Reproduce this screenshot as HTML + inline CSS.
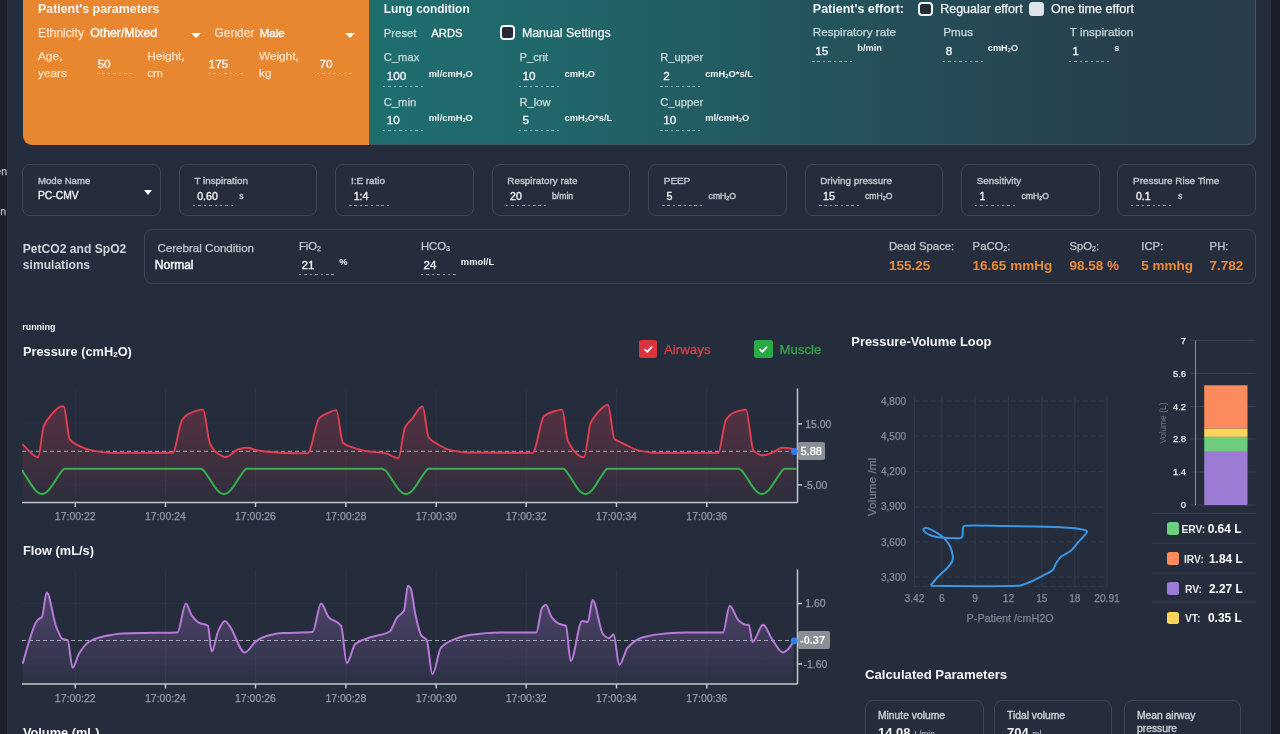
<!DOCTYPE html>
<html><head><meta charset="utf-8"><style>
html,body{margin:0;padding:0;width:1280px;height:734px;overflow:hidden;background:#252d3c;font-family:"Liberation Sans",sans-serif}
.t{position:absolute;white-space:nowrap;line-height:1}
body{will-change:transform}
.r{position:absolute}
svg.r{overflow:visible}
</style></head><body>
<div class="r" style="left:0px;top:0px;width:7.3px;height:734px;background:linear-gradient(90deg,#1c202a 0,#1c202a 4.5px,#181c28 7.3px)"></div>
<div class="r" style="left:7.3px;top:0px;width:3px;height:734px;background:linear-gradient(90deg,#2b2f3e,#262d3c)"></div>
<div class="r" style="left:1268.4px;top:0px;width:3px;height:734px;background:linear-gradient(90deg,#262d3c,#2a2e3e)"></div>
<div class="r" style="left:1271.4px;top:0px;width:8.6px;height:734px;background:linear-gradient(90deg,#1a1d28 0,#1c1f29 2px,#1c1f29 8.6px)"></div>
<div class="t" style="left:-60.0px;top:166px;font-size:10.5px;font-weight:400;color:#b8bcc2;width:67px;text-align:right;-webkit-text-stroke:0.25px currentColor;">Open</div>
<div class="t" style="left:-60.0px;top:206px;font-size:10.5px;font-weight:400;color:#b8bcc2;width:66px;text-align:right;-webkit-text-stroke:0.25px currentColor;">Run</div>
<div class="r" style="left:360px;top:-20px;width:896px;height:165px;border-radius:0 0 9px 0;background:linear-gradient(90deg,#1e6e6f 9px,#21666a 200px,#24525b 490px,#283e4c 780px,#283c4b 896px);border:1px solid #3b5864;border-left:none;box-sizing:border-box"></div>
<div class="r" style="left:22.6px;top:-20px;width:346.4px;height:165.4px;border-radius:0 0 0 9px;background:#e8872f"></div>
<div class="t" style="left:38.0px;top:3px;font-size:12.4px;font-weight:700;color:#f3f4f6;">Patient's parameters</div>
<div class="t" style="left:38.0px;top:27px;font-size:12.2px;font-weight:400;color:rgba(255,240,225,0.82);;-webkit-text-stroke:0.25px currentColor;">Ethnicity</div>
<div class="t" style="left:90.2px;top:27px;font-size:12.3px;font-weight:400;color:#f3f4f6;;-webkit-text-stroke:0.5px currentColor;">Other/Mixed</div>
<div class="r" style="left:191.0px;top:32.8px;width:0;height:0;border-left:5.0px solid transparent;border-right:5.0px solid transparent;border-top:5px solid #fff"></div>
<div class="t" style="left:214.6px;top:28px;font-size:11.9px;font-weight:400;color:rgba(255,240,225,0.82);;-webkit-text-stroke:0.25px currentColor;">Gender</div>
<div class="t" style="left:259.5px;top:27px;font-size:11.7px;font-weight:400;color:#f3f4f6;;-webkit-text-stroke:0.5px currentColor;">Male</div>
<div class="r" style="left:345.4px;top:32.6px;width:0;height:0;border-left:5.0px solid transparent;border-right:5.0px solid transparent;border-top:5px solid #fff"></div>
<div class="t" style="left:38.0px;top:51px;font-size:11.8px;font-weight:400;color:rgba(255,240,225,0.82);;-webkit-text-stroke:0.25px currentColor;">Age,</div>
<div class="t" style="left:38.0px;top:68px;font-size:11.8px;font-weight:400;color:rgba(255,240,225,0.82);;-webkit-text-stroke:0.25px currentColor;">years</div>
<div class="t" style="left:97.5px;top:59px;font-size:11.8px;font-weight:400;color:#f3f4f6;;-webkit-text-stroke:0.35px currentColor;">50</div>
<div class="r" style="left:97px;top:73px;width:36px;height:1px;background:repeating-linear-gradient(90deg,rgba(255,255,255,0.5) 0 2.5px,transparent 2.5px 5.4px)"></div>
<div class="t" style="left:147.2px;top:51px;font-size:11.8px;font-weight:400;color:rgba(255,240,225,0.82);;-webkit-text-stroke:0.25px currentColor;">Height,</div>
<div class="t" style="left:147.2px;top:68px;font-size:11.8px;font-weight:400;color:rgba(255,240,225,0.82);;-webkit-text-stroke:0.25px currentColor;">cm</div>
<div class="t" style="left:208.6px;top:59px;font-size:11.8px;font-weight:400;color:#f3f4f6;;-webkit-text-stroke:0.35px currentColor;">175</div>
<div class="r" style="left:208px;top:73px;width:36px;height:1px;background:repeating-linear-gradient(90deg,rgba(255,255,255,0.5) 0 2.5px,transparent 2.5px 5.4px)"></div>
<div class="t" style="left:259.0px;top:51px;font-size:11.8px;font-weight:400;color:rgba(255,240,225,0.82);;-webkit-text-stroke:0.25px currentColor;">Weight,</div>
<div class="t" style="left:259.0px;top:68px;font-size:11.8px;font-weight:400;color:rgba(255,240,225,0.82);;-webkit-text-stroke:0.25px currentColor;">kg</div>
<div class="t" style="left:319.5px;top:59px;font-size:11.8px;font-weight:400;color:#f3f4f6;;-webkit-text-stroke:0.35px currentColor;">70</div>
<div class="r" style="left:317px;top:73px;width:37px;height:1px;background:repeating-linear-gradient(90deg,rgba(255,255,255,0.5) 0 2.5px,transparent 2.5px 5.4px)"></div>
<div class="t" style="left:383.8px;top:4px;font-size:11.9px;font-weight:700;color:#f3f4f6;">Lung condition</div>
<div class="t" style="left:383.8px;top:28px;font-size:11.3px;font-weight:400;color:rgba(228,240,240,0.8);;-webkit-text-stroke:0.25px currentColor;">Preset</div>
<div class="t" style="left:431.2px;top:28px;font-size:11.3px;font-weight:400;color:#f3f4f6;;-webkit-text-stroke:0.35px currentColor;">ARDS</div>
<div class="r" style="left:500px;top:25px;width:15px;height:15px;border:2.5px solid #f2f4f7;border-radius:4px;background:#262a36;box-sizing:border-box"></div>
<div class="t" style="left:521.9px;top:27px;font-size:12.4px;font-weight:400;color:#f3f4f6;;-webkit-text-stroke:0.25px currentColor;">Manual Settings</div>
<div class="t" style="left:383.8px;top:52px;font-size:11.2px;font-weight:400;color:rgba(228,240,240,0.8);;-webkit-text-stroke:0.25px currentColor;">C_max</div>
<div class="t" style="left:386.8px;top:70px;font-size:11.7px;font-weight:400;color:#f3f4f6;;-webkit-text-stroke:0.35px currentColor;">100</div>
<div class="r" style="left:383.3px;top:85.5px;width:40.0px;height:1px;background:repeating-linear-gradient(90deg,rgba(255,255,255,0.5) 0 2.5px,transparent 2.5px 5.4px)"></div>
<div class="t" style="left:428.8px;top:70px;font-size:9.3px;font-weight:700;color:#f3f4f6;">ml/cmH<span style="font-size:0.62em;vertical-align:-0.15em">2</span>O</div>
<div class="t" style="left:383.8px;top:97px;font-size:11.2px;font-weight:400;color:rgba(228,240,240,0.8);;-webkit-text-stroke:0.25px currentColor;">C_min</div>
<div class="t" style="left:386.8px;top:114px;font-size:11.7px;font-weight:400;color:#f3f4f6;;-webkit-text-stroke:0.35px currentColor;">10</div>
<div class="r" style="left:383.3px;top:129.8px;width:40.0px;height:1px;background:repeating-linear-gradient(90deg,rgba(255,255,255,0.5) 0 2.5px,transparent 2.5px 5.4px)"></div>
<div class="t" style="left:428.8px;top:114px;font-size:9.3px;font-weight:700;color:#f3f4f6;">ml/cmH<span style="font-size:0.62em;vertical-align:-0.15em">2</span>O</div>
<div class="t" style="left:519.5px;top:52px;font-size:11.2px;font-weight:400;color:rgba(228,240,240,0.8);;-webkit-text-stroke:0.25px currentColor;">P_crit</div>
<div class="t" style="left:522.5px;top:70px;font-size:11.7px;font-weight:400;color:#f3f4f6;;-webkit-text-stroke:0.35px currentColor;">10</div>
<div class="r" style="left:519.0px;top:85.5px;width:40.0px;height:1px;background:repeating-linear-gradient(90deg,rgba(255,255,255,0.5) 0 2.5px,transparent 2.5px 5.4px)"></div>
<div class="t" style="left:564.5px;top:70px;font-size:9.3px;font-weight:700;color:#f3f4f6;">cmH<span style="font-size:0.62em;vertical-align:-0.15em">2</span>O</div>
<div class="t" style="left:519.5px;top:97px;font-size:11.2px;font-weight:400;color:rgba(228,240,240,0.8);;-webkit-text-stroke:0.25px currentColor;">R_low</div>
<div class="t" style="left:522.5px;top:114px;font-size:11.7px;font-weight:400;color:#f3f4f6;;-webkit-text-stroke:0.35px currentColor;">5</div>
<div class="r" style="left:519.0px;top:129.8px;width:40.0px;height:1px;background:repeating-linear-gradient(90deg,rgba(255,255,255,0.5) 0 2.5px,transparent 2.5px 5.4px)"></div>
<div class="t" style="left:564.5px;top:114px;font-size:9.3px;font-weight:700;color:#f3f4f6;">cmH<span style="font-size:0.62em;vertical-align:-0.15em">2</span>O*s/L</div>
<div class="t" style="left:660.2px;top:52px;font-size:11.2px;font-weight:400;color:rgba(228,240,240,0.8);;-webkit-text-stroke:0.25px currentColor;">R_upper</div>
<div class="t" style="left:663.2px;top:70px;font-size:11.7px;font-weight:400;color:#f3f4f6;;-webkit-text-stroke:0.35px currentColor;">2</div>
<div class="r" style="left:659.7px;top:85.5px;width:40.0px;height:1px;background:repeating-linear-gradient(90deg,rgba(255,255,255,0.5) 0 2.5px,transparent 2.5px 5.4px)"></div>
<div class="t" style="left:705.2px;top:70px;font-size:9.3px;font-weight:700;color:#f3f4f6;">cmH<span style="font-size:0.62em;vertical-align:-0.15em">2</span>O*s/L</div>
<div class="t" style="left:660.2px;top:97px;font-size:11.2px;font-weight:400;color:rgba(228,240,240,0.8);;-webkit-text-stroke:0.25px currentColor;">C_upper</div>
<div class="t" style="left:663.2px;top:114px;font-size:11.7px;font-weight:400;color:#f3f4f6;;-webkit-text-stroke:0.35px currentColor;">10</div>
<div class="r" style="left:659.7px;top:129.8px;width:40.0px;height:1px;background:repeating-linear-gradient(90deg,rgba(255,255,255,0.5) 0 2.5px,transparent 2.5px 5.4px)"></div>
<div class="t" style="left:705.2px;top:114px;font-size:9.3px;font-weight:700;color:#f3f4f6;">ml/cmH<span style="font-size:0.62em;vertical-align:-0.15em">2</span>O</div>
<div class="t" style="left:812.8px;top:3px;font-size:12.5px;font-weight:700;color:#f3f4f6;">Patient's effort:</div>
<div class="r" style="left:918px;top:2px;width:15px;height:14px;border:2.5px solid #f2f4f7;border-radius:4px;background:#262a36;box-sizing:border-box"></div>
<div class="t" style="left:940.2px;top:3px;font-size:12.5px;font-weight:400;color:#f3f4f6;;-webkit-text-stroke:0.25px currentColor;">Regualar effort</div>
<div class="r" style="left:1029px;top:1.5px;width:15px;height:14px;border-radius:3.5px;background:#dfe3ea"></div>
<div class="t" style="left:1051.0px;top:3px;font-size:12.6px;font-weight:400;color:#f3f4f6;;-webkit-text-stroke:0.25px currentColor;">One time effort</div>
<div class="t" style="left:812.8px;top:26px;font-size:11.7px;font-weight:400;color:rgba(228,240,240,0.8);;-webkit-text-stroke:0.25px currentColor;">Respiratory rate</div>
<div class="t" style="left:815.3px;top:45px;font-size:11.7px;font-weight:400;color:#f3f4f6;;-webkit-text-stroke:0.35px currentColor;">15</div>
<div class="r" style="left:812.0px;top:60.5px;width:40.799999999999955px;height:1px;background:repeating-linear-gradient(90deg,rgba(255,255,255,0.5) 0 2.5px,transparent 2.5px 5.4px)"></div>
<div class="t" style="left:857.3px;top:44px;font-size:9.2px;font-weight:700;color:#f3f4f6;">b/min</div>
<div class="t" style="left:943.3px;top:26px;font-size:11.7px;font-weight:400;color:rgba(228,240,240,0.8);;-webkit-text-stroke:0.25px currentColor;">Pmus</div>
<div class="t" style="left:945.8px;top:45px;font-size:11.7px;font-weight:400;color:#f3f4f6;;-webkit-text-stroke:0.35px currentColor;">8</div>
<div class="r" style="left:942.5px;top:60.5px;width:40.799999999999955px;height:1px;background:repeating-linear-gradient(90deg,rgba(255,255,255,0.5) 0 2.5px,transparent 2.5px 5.4px)"></div>
<div class="t" style="left:987.8px;top:44px;font-size:9.2px;font-weight:700;color:#f3f4f6;">cmH<span style="font-size:0.62em;vertical-align:-0.15em">2</span>O</div>
<div class="t" style="left:1069.8px;top:26px;font-size:11.7px;font-weight:400;color:rgba(228,240,240,0.8);;-webkit-text-stroke:0.25px currentColor;">T inspiration</div>
<div class="t" style="left:1072.3px;top:45px;font-size:11.7px;font-weight:400;color:#f3f4f6;;-webkit-text-stroke:0.35px currentColor;">1</div>
<div class="r" style="left:1069.0px;top:60.5px;width:40.799999999999955px;height:1px;background:repeating-linear-gradient(90deg,rgba(255,255,255,0.5) 0 2.5px,transparent 2.5px 5.4px)"></div>
<div class="t" style="left:1114.3px;top:44px;font-size:9.2px;font-weight:700;color:#f3f4f6;">s</div>
<div class="r" style="left:22.3px;top:164px;width:138.6px;height:52px;border:1px solid #3e4655;border-radius:8px;box-sizing:border-box"></div>
<div class="t" style="left:38.0px;top:176px;font-size:9.6px;font-weight:400;color:#c5c9cf;;-webkit-text-stroke:0.35px currentColor;">Mode Name</div>
<div class="t" style="left:38.0px;top:191px;font-size:10.3px;font-weight:400;color:#f3f4f6;;-webkit-text-stroke:0.35px currentColor;">PC-CMV</div>
<div class="r" style="left:143.6px;top:189.8px;width:0;height:0;border-left:4.5px solid transparent;border-right:4.5px solid transparent;border-top:5px solid #fff"></div>
<div class="r" style="left:178.75px;top:164px;width:138.6px;height:52px;border:1px solid #3e4655;border-radius:8px;box-sizing:border-box"></div>
<div class="t" style="left:194.4px;top:176px;font-size:9.9px;font-weight:400;color:#c5c9cf;;-webkit-text-stroke:0.35px currentColor;">T inspiration</div>
<div class="t" style="left:197.2px;top:191px;font-size:10.6px;font-weight:400;color:#f3f4f6;;-webkit-text-stroke:0.35px currentColor;">0.60</div>
<div class="r" style="left:192.75px;top:205px;width:43.0px;height:1px;background:repeating-linear-gradient(90deg,rgba(255,255,255,0.5) 0 2.5px,transparent 2.5px 5.4px)"></div>
<div class="t" style="left:239.2px;top:192px;font-size:8.6px;font-weight:400;color:#c9cdd3;;-webkit-text-stroke:0.35px currentColor;">s</div>
<div class="r" style="left:335.2px;top:164px;width:138.6px;height:52px;border:1px solid #3e4655;border-radius:8px;box-sizing:border-box"></div>
<div class="t" style="left:350.9px;top:176px;font-size:9.9px;font-weight:400;color:#c5c9cf;;-webkit-text-stroke:0.35px currentColor;">I:E ratio</div>
<div class="t" style="left:353.7px;top:191px;font-size:10.6px;font-weight:400;color:#f3f4f6;;-webkit-text-stroke:0.35px currentColor;">1:4</div>
<div class="r" style="left:349.2px;top:205px;width:43.0px;height:1px;background:repeating-linear-gradient(90deg,rgba(255,255,255,0.5) 0 2.5px,transparent 2.5px 5.4px)"></div>
<div class="r" style="left:491.65px;top:164px;width:138.6px;height:52px;border:1px solid #3e4655;border-radius:8px;box-sizing:border-box"></div>
<div class="t" style="left:507.3px;top:176px;font-size:9.9px;font-weight:400;color:#c5c9cf;;-webkit-text-stroke:0.35px currentColor;">Respiratory rate</div>
<div class="t" style="left:510.1px;top:191px;font-size:10.6px;font-weight:400;color:#f3f4f6;;-webkit-text-stroke:0.35px currentColor;">20</div>
<div class="r" style="left:505.65px;top:205px;width:43.0px;height:1px;background:repeating-linear-gradient(90deg,rgba(255,255,255,0.5) 0 2.5px,transparent 2.5px 5.4px)"></div>
<div class="t" style="left:552.1px;top:192px;font-size:8.6px;font-weight:400;color:#c9cdd3;;-webkit-text-stroke:0.35px currentColor;">b/min</div>
<div class="r" style="left:648.0999999999999px;top:164px;width:138.6px;height:52px;border:1px solid #3e4655;border-radius:8px;box-sizing:border-box"></div>
<div class="t" style="left:663.8px;top:176px;font-size:9.9px;font-weight:400;color:#c5c9cf;;-webkit-text-stroke:0.35px currentColor;">PEEP</div>
<div class="t" style="left:666.6px;top:191px;font-size:10.6px;font-weight:400;color:#f3f4f6;;-webkit-text-stroke:0.35px currentColor;">5</div>
<div class="r" style="left:662.0999999999999px;top:205px;width:43.0px;height:1px;background:repeating-linear-gradient(90deg,rgba(255,255,255,0.5) 0 2.5px,transparent 2.5px 5.4px)"></div>
<div class="t" style="left:708.6px;top:192px;font-size:8.6px;font-weight:400;color:#c9cdd3;;-webkit-text-stroke:0.35px currentColor;">cmH<span style="font-size:0.62em;vertical-align:-0.15em">2</span>O</div>
<div class="r" style="left:804.55px;top:164px;width:138.6px;height:52px;border:1px solid #3e4655;border-radius:8px;box-sizing:border-box"></div>
<div class="t" style="left:820.2px;top:176px;font-size:9.9px;font-weight:400;color:#c5c9cf;;-webkit-text-stroke:0.35px currentColor;">Driving pressure</div>
<div class="t" style="left:823.0px;top:191px;font-size:10.6px;font-weight:400;color:#f3f4f6;;-webkit-text-stroke:0.35px currentColor;">15</div>
<div class="r" style="left:818.55px;top:205px;width:43.0px;height:1px;background:repeating-linear-gradient(90deg,rgba(255,255,255,0.5) 0 2.5px,transparent 2.5px 5.4px)"></div>
<div class="t" style="left:865.0px;top:192px;font-size:8.6px;font-weight:400;color:#c9cdd3;;-webkit-text-stroke:0.35px currentColor;">cmH<span style="font-size:0.62em;vertical-align:-0.15em">2</span>O</div>
<div class="r" style="left:960.9999999999999px;top:164px;width:138.6px;height:52px;border:1px solid #3e4655;border-radius:8px;box-sizing:border-box"></div>
<div class="t" style="left:976.7px;top:176px;font-size:9.9px;font-weight:400;color:#c5c9cf;;-webkit-text-stroke:0.35px currentColor;">Sensitivity</div>
<div class="t" style="left:979.5px;top:191px;font-size:10.6px;font-weight:400;color:#f3f4f6;;-webkit-text-stroke:0.35px currentColor;">1</div>
<div class="r" style="left:974.9999999999999px;top:205px;width:43.0px;height:1px;background:repeating-linear-gradient(90deg,rgba(255,255,255,0.5) 0 2.5px,transparent 2.5px 5.4px)"></div>
<div class="t" style="left:1021.5px;top:192px;font-size:8.6px;font-weight:400;color:#c9cdd3;;-webkit-text-stroke:0.35px currentColor;">cmH<span style="font-size:0.62em;vertical-align:-0.15em">2</span>O</div>
<div class="r" style="left:1117.4499999999998px;top:164px;width:138.6px;height:52px;border:1px solid #3e4655;border-radius:8px;box-sizing:border-box"></div>
<div class="t" style="left:1133.1px;top:176px;font-size:9.9px;font-weight:400;color:#c5c9cf;;-webkit-text-stroke:0.35px currentColor;">Pressure Rise Time</div>
<div class="t" style="left:1135.9px;top:191px;font-size:10.6px;font-weight:400;color:#f3f4f6;;-webkit-text-stroke:0.35px currentColor;">0.1</div>
<div class="r" style="left:1131.4499999999998px;top:205px;width:43.0px;height:1px;background:repeating-linear-gradient(90deg,rgba(255,255,255,0.5) 0 2.5px,transparent 2.5px 5.4px)"></div>
<div class="t" style="left:1177.9px;top:192px;font-size:8.6px;font-weight:400;color:#c9cdd3;;-webkit-text-stroke:0.35px currentColor;">s</div>
<div class="t" style="left:22.8px;top:243px;font-size:12.1px;font-weight:700;color:#cfd2d7;">PetCO2 and SpO2</div>
<div class="t" style="left:22.8px;top:259px;font-size:12.1px;font-weight:700;color:#cfd2d7;">simulations</div>
<div class="r" style="left:144px;top:229px;width:1112px;height:55px;border:1px solid #3e4655;border-radius:8px;box-sizing:border-box"></div>
<div class="t" style="left:157.4px;top:242px;font-size:11.6px;font-weight:400;color:#c5c9cf;;-webkit-text-stroke:0.25px currentColor;">Cerebral Condition</div>
<div class="t" style="left:154.8px;top:259px;font-size:12px;font-weight:400;color:#f3f4f6;;-webkit-text-stroke:0.5px currentColor;">Normal</div>
<div class="t" style="left:298.9px;top:241px;font-size:11.3px;font-weight:400;color:#c5c9cf;;-webkit-text-stroke:0.25px currentColor;">FiO<span style="font-size:0.62em;vertical-align:-0.15em">2</span></div>
<div class="t" style="left:301.5px;top:259px;font-size:11.6px;font-weight:400;color:#f3f4f6;;-webkit-text-stroke:0.35px currentColor;">21</div>
<div class="r" style="left:299px;top:274px;width:36px;height:1px;background:repeating-linear-gradient(90deg,rgba(255,255,255,0.5) 0 2.5px,transparent 2.5px 5.4px)"></div>
<div class="t" style="left:339.3px;top:257px;font-size:9.4px;font-weight:700;color:#f3f4f6;">%</div>
<div class="t" style="left:420.9px;top:241px;font-size:11.3px;font-weight:400;color:#c5c9cf;;-webkit-text-stroke:0.25px currentColor;">HCO<span style="font-size:0.62em;vertical-align:-0.15em">3</span></div>
<div class="t" style="left:423.5px;top:259px;font-size:11.6px;font-weight:400;color:#f3f4f6;;-webkit-text-stroke:0.35px currentColor;">24</div>
<div class="r" style="left:421px;top:274px;width:35px;height:1px;background:repeating-linear-gradient(90deg,rgba(255,255,255,0.5) 0 2.5px,transparent 2.5px 5.4px)"></div>
<div class="t" style="left:460.8px;top:257px;font-size:9.4px;font-weight:700;color:#f3f4f6;">mmol/L</div>
<div class="t" style="left:888.9px;top:241px;font-size:11.3px;font-weight:400;color:#c5c9cf;;-webkit-text-stroke:0.25px currentColor;">Dead Space:</div>
<div class="t" style="left:888.9px;top:259px;font-size:13.5px;font-weight:700;color:#ea8a3b;">155.25</div>
<div class="t" style="left:972.6px;top:241px;font-size:11.3px;font-weight:400;color:#c5c9cf;;-webkit-text-stroke:0.25px currentColor;">PaCO<span style="font-size:0.62em;vertical-align:-0.15em">2</span>:</div>
<div class="t" style="left:972.6px;top:259px;font-size:13.5px;font-weight:700;color:#ea8a3b;">16.65 mmHg</div>
<div class="t" style="left:1069.4px;top:241px;font-size:11.3px;font-weight:400;color:#c5c9cf;;-webkit-text-stroke:0.25px currentColor;">SpO<span style="font-size:0.62em;vertical-align:-0.15em">2</span>:</div>
<div class="t" style="left:1069.4px;top:259px;font-size:13.5px;font-weight:700;color:#ea8a3b;">98.58 %</div>
<div class="t" style="left:1141.3px;top:241px;font-size:11.3px;font-weight:400;color:#c5c9cf;;-webkit-text-stroke:0.25px currentColor;">ICP:</div>
<div class="t" style="left:1141.3px;top:259px;font-size:13.5px;font-weight:700;color:#ea8a3b;">5 mmhg</div>
<div class="t" style="left:1209.6px;top:241px;font-size:11.3px;font-weight:400;color:#c5c9cf;;-webkit-text-stroke:0.25px currentColor;">PH:</div>
<div class="t" style="left:1209.6px;top:259px;font-size:13.5px;font-weight:700;color:#ea8a3b;">7.782</div>
<div class="t" style="left:22.3px;top:323px;font-size:8.9px;font-weight:700;color:#f3f4f6;">running</div>
<div class="t" style="left:22.9px;top:346px;font-size:12.8px;font-weight:700;color:#f3f4f6;">Pressure (cmH<span style="font-size:0.62em;vertical-align:-0.15em">2</span>O)</div>
<div class="t" style="left:22.9px;top:545px;font-size:12.8px;font-weight:700;color:#f3f4f6;">Flow (mL/s)</div>
<div class="t" style="left:22.9px;top:727px;font-size:12.8px;font-weight:700;color:#f3f4f6;">Volume (mL)</div>
<div class="r" style="left:638.5px;top:340px;width:18.5px;height:18.3px;background:#dc3341;border-radius:2.5px"></div>
<svg class="r" style="left:638.5px;top:340px" width="18.5" height="18.3"><path d="M6 9.6 L8.3 11.8 L12.6 7.2" stroke="#fff" stroke-width="1.7" fill="none" stroke-linecap="round" stroke-linejoin="round"/></svg>
<div class="t" style="left:664.0px;top:343px;font-size:13.3px;font-weight:400;color:#d8404d;;-webkit-text-stroke:0.25px currentColor;">Airways</div>
<div class="r" style="left:754px;top:340px;width:18.5px;height:18.3px;background:#2ba846;border-radius:2.5px"></div>
<svg class="r" style="left:754px;top:340px" width="18.5" height="18.3"><path d="M6 9.6 L8.3 11.8 L12.6 7.2" stroke="#fff" stroke-width="1.7" fill="none" stroke-linecap="round" stroke-linejoin="round"/></svg>
<div class="t" style="left:779.6px;top:343px;font-size:13.2px;font-weight:400;color:#38a84b;;-webkit-text-stroke:0.25px currentColor;">Muscle</div>
<svg class="r" style="left:0;top:0" width="1280" height="734">
<defs><linearGradient id="gr" x1="0" y1="0" x2="0" y2="1" gradientUnits="objectBoundingBox"><stop offset="0" stop-color="#c83a50" stop-opacity="0.30"/><stop offset="1" stop-color="#c83a50" stop-opacity="0.05"/></linearGradient>
<linearGradient id="gp" x1="0" y1="0" x2="0" y2="1"><stop offset="0" stop-color="#a070c8" stop-opacity="0.38"/><stop offset="1" stop-color="#a070c8" stop-opacity="0.05"/></linearGradient></defs>
<line x1="75.3" y1="388" x2="75.3" y2="502" stroke="#ffffff" stroke-opacity="0.035" stroke-width="1"/>
<line x1="75.3" y1="570" x2="75.3" y2="684" stroke="#ffffff" stroke-opacity="0.035" stroke-width="1"/>
<line x1="165.5" y1="388" x2="165.5" y2="502" stroke="#ffffff" stroke-opacity="0.035" stroke-width="1"/>
<line x1="165.5" y1="570" x2="165.5" y2="684" stroke="#ffffff" stroke-opacity="0.035" stroke-width="1"/>
<line x1="255.5" y1="388" x2="255.5" y2="502" stroke="#ffffff" stroke-opacity="0.035" stroke-width="1"/>
<line x1="255.5" y1="570" x2="255.5" y2="684" stroke="#ffffff" stroke-opacity="0.035" stroke-width="1"/>
<line x1="345.9" y1="388" x2="345.9" y2="502" stroke="#ffffff" stroke-opacity="0.035" stroke-width="1"/>
<line x1="345.9" y1="570" x2="345.9" y2="684" stroke="#ffffff" stroke-opacity="0.035" stroke-width="1"/>
<line x1="436.2" y1="388" x2="436.2" y2="502" stroke="#ffffff" stroke-opacity="0.035" stroke-width="1"/>
<line x1="436.2" y1="570" x2="436.2" y2="684" stroke="#ffffff" stroke-opacity="0.035" stroke-width="1"/>
<line x1="526.2" y1="388" x2="526.2" y2="502" stroke="#ffffff" stroke-opacity="0.035" stroke-width="1"/>
<line x1="526.2" y1="570" x2="526.2" y2="684" stroke="#ffffff" stroke-opacity="0.035" stroke-width="1"/>
<line x1="616.5" y1="388" x2="616.5" y2="502" stroke="#ffffff" stroke-opacity="0.035" stroke-width="1"/>
<line x1="616.5" y1="570" x2="616.5" y2="684" stroke="#ffffff" stroke-opacity="0.035" stroke-width="1"/>
<line x1="706.8" y1="388" x2="706.8" y2="502" stroke="#ffffff" stroke-opacity="0.035" stroke-width="1"/>
<line x1="706.8" y1="570" x2="706.8" y2="684" stroke="#ffffff" stroke-opacity="0.035" stroke-width="1"/>
<line x1="22" y1="423.9" x2="797" y2="423.9" stroke="#ffffff" stroke-opacity="0.025"/>
<line x1="22" y1="484.9" x2="797" y2="484.9" stroke="#ffffff" stroke-opacity="0.025"/>
<line x1="22" y1="603.5" x2="797" y2="603.5" stroke="#ffffff" stroke-opacity="0.025"/>
<line x1="22" y1="664" x2="797" y2="664" stroke="#ffffff" stroke-opacity="0.025"/>
<path d="M22.90 444.80 C27.97 448.93 33.03 457.20 38.10 457.20 C40.00 457.20 41.90 430.45 43.80 425.80 C45.40 421.89 47.00 420.01 48.60 418.10 C53.07 412.78 57.53 406.30 62.00 406.30 C62.63 406.30 63.27 406.48 63.90 406.70 C65.80 407.37 67.70 436.49 69.60 439.10 C72.13 442.58 74.67 443.41 77.20 444.80 C81.03 446.90 84.87 448.73 88.70 449.60 C96.33 451.33 103.97 452.90 111.60 452.90 C131.93 452.90 152.27 452.90 172.60 452.90 C175.77 452.90 178.93 424.70 182.10 420.00 C184.00 417.18 185.90 415.27 187.80 414.30 C192.90 411.69 198.00 409.60 203.10 409.60 C205.33 409.60 207.57 438.07 209.80 443.00 C212.03 447.93 214.27 450.81 216.50 452.50 C219.50 454.77 222.50 457.00 225.50 457.00 C230.03 457.00 234.57 450.04 239.10 449.00 C241.97 448.34 244.83 447.70 247.70 447.70 C250.53 447.70 253.37 449.72 256.20 450.20 C263.20 451.39 270.20 452.16 277.20 452.50 C287.37 452.99 297.53 453.40 307.70 453.40 C311.53 453.40 315.37 421.88 319.20 418.10 C321.73 415.60 324.27 414.54 326.80 413.40 C329.97 411.98 333.13 410.10 336.30 410.10 C338.53 410.10 340.77 441.05 343.00 443.00 C346.50 446.06 350.00 446.47 353.50 447.70 C357.33 449.05 361.17 450.34 365.00 451.00 C371.97 452.19 378.93 452.11 385.90 453.40 C390.03 454.17 394.17 458.20 398.30 458.20 C400.53 458.20 402.77 432.17 405.00 427.70 C407.53 422.63 410.07 421.18 412.60 418.10 C415.90 414.08 419.20 406.50 422.50 406.50 C424.53 406.50 426.57 434.34 428.60 437.20 C431.47 441.24 434.33 442.14 437.20 443.90 C441.00 446.24 444.80 448.67 448.60 449.60 C454.97 451.15 461.33 452.41 467.70 452.50 C489.30 452.81 510.90 452.90 532.50 452.90 C536.33 452.90 540.17 419.41 544.00 416.20 C547.17 413.55 550.33 412.46 553.50 411.50 C556.37 410.63 559.23 409.60 562.10 409.60 C564.00 409.60 565.90 437.38 567.80 441.00 C573.20 451.28 578.60 457.20 584.00 457.20 C586.23 457.20 588.47 428.15 590.70 422.90 C592.30 419.14 593.90 417.15 595.50 415.30 C599.63 410.53 603.77 404.80 607.90 404.80 C610.10 404.80 612.30 437.04 614.50 439.10 C616.33 440.81 618.17 441.06 620.00 442.00 C622.53 443.30 625.07 444.64 627.60 445.80 C631.43 447.55 635.27 449.85 639.10 450.60 C645.43 451.84 651.77 452.90 658.10 452.90 C678.13 452.90 698.17 452.90 718.20 452.90 C720.77 452.90 723.33 423.84 725.90 420.00 C728.73 415.76 731.57 413.52 734.40 412.40 C738.23 410.89 742.07 409.60 745.90 409.60 C748.43 409.60 750.97 448.23 753.50 450.60 C756.67 453.56 759.83 455.30 763.00 455.30 C766.20 455.30 769.40 453.68 772.60 452.50 C775.77 451.33 778.93 447.70 782.10 447.70 C785.30 447.70 788.50 447.99 791.70 448.70 C792.63 448.91 793.57 450.57 794.50 451.50 L794.5 502 L22.9 502 Z" fill="url(#gr)"/>
<path d="M22.90 663.00 C25.10 655.37 27.30 646.79 29.50 640.10 C31.73 633.31 33.97 625.13 36.20 622.00 C37.47 620.23 38.73 619.04 40.00 618.20 C40.63 617.78 41.27 617.74 41.90 617.20 C43.50 615.83 45.10 592.40 46.70 592.40 C49.87 592.40 53.03 619.19 56.20 626.80 C58.43 632.17 60.67 638.47 62.90 639.20 C64.50 639.72 66.10 639.52 67.70 640.10 C69.30 640.68 70.90 667.80 72.50 667.80 C74.70 667.80 76.90 656.96 79.10 653.50 C82.30 648.47 85.50 643.90 88.70 642.00 C93.77 638.99 98.83 637.41 103.90 636.30 C110.27 634.90 116.63 633.67 123.00 633.40 C130.00 633.11 137.00 633.01 144.00 632.90 C155.13 632.72 166.27 632.83 177.40 632.50 C180.23 632.42 183.07 603.50 185.90 603.50 C187.83 603.50 189.77 612.67 191.70 615.30 C194.23 618.75 196.77 621.61 199.30 622.90 C202.17 624.36 205.03 623.72 207.90 625.80 C209.17 626.72 210.43 651.50 211.70 651.50 C213.93 651.50 216.17 635.11 218.40 630.60 C220.53 626.29 222.67 621.00 224.80 621.00 C226.37 621.00 227.93 623.87 229.50 625.80 C234.60 632.08 239.70 652.50 244.80 652.50 C248.60 652.50 252.40 643.61 256.20 641.10 C259.40 638.99 262.60 637.23 265.80 636.30 C271.50 634.64 277.20 633.32 282.90 633.00 C292.77 632.45 302.63 632.83 312.50 632.10 C315.37 631.89 318.23 603.50 321.10 603.50 C323.63 603.50 326.17 614.57 328.70 617.20 C332.83 621.49 336.97 620.04 341.10 625.80 C343.00 628.45 344.90 663.00 346.80 663.00 C349.67 663.00 352.53 646.14 355.40 643.90 C360.50 639.92 365.60 638.82 370.70 637.20 C375.77 635.59 380.83 635.21 385.90 633.40 C387.17 632.95 388.43 632.44 389.70 631.50 C392.27 629.60 394.83 620.51 397.40 617.20 C399.63 614.32 401.87 614.65 404.10 610.50 C405.37 608.14 406.63 585.70 407.90 585.70 C408.83 585.70 409.77 587.06 410.70 588.60 C412.30 591.24 413.90 608.37 415.50 615.30 C417.40 623.53 419.30 632.65 421.20 635.30 C423.03 637.85 424.87 637.32 426.70 640.10 C428.60 642.98 430.50 674.40 432.40 674.40 C435.27 674.40 438.13 650.94 441.00 647.70 C444.80 643.40 448.60 641.70 452.40 640.10 C458.13 637.68 463.87 635.78 469.60 635.00 C479.77 633.62 489.93 632.50 500.10 632.50 C512.17 632.50 524.23 632.50 536.30 632.50 C538.23 632.50 540.17 610.09 542.10 607.70 C543.37 606.14 544.63 604.80 545.90 604.80 C547.80 604.80 549.70 614.77 551.60 617.20 C554.13 620.44 556.67 622.82 559.20 623.90 C561.43 624.85 563.67 624.51 565.90 625.80 C567.50 626.72 569.10 661.10 570.70 661.10 C574.50 661.10 578.30 621.00 582.10 621.00 C584.00 621.00 585.90 622.00 587.80 622.00 C589.40 622.00 591.00 600.10 592.60 600.10 C596.10 600.10 599.60 630.76 603.10 634.40 C605.00 636.38 606.90 638.20 608.80 638.20 C610.40 638.20 612.00 634.40 613.60 634.40 C615.50 634.40 617.40 664.90 619.30 664.90 C622.07 664.90 624.83 650.70 627.60 647.70 C632.70 642.17 637.80 638.62 642.90 637.20 C650.53 635.07 658.17 633.92 665.80 633.40 C672.80 632.93 679.80 632.50 686.80 632.50 C698.87 632.50 710.93 632.50 723.00 632.50 C725.23 632.50 727.47 605.80 729.70 605.80 C732.57 605.80 735.43 617.54 738.30 620.10 C740.83 622.36 743.37 624.80 745.90 624.80 C746.83 624.80 747.77 624.80 748.70 624.80 C750.00 624.80 751.30 642.00 752.60 642.00 C756.07 642.00 759.53 624.80 763.00 624.80 C766.20 624.80 769.40 635.75 772.60 640.10 C776.10 644.86 779.60 652.50 783.10 652.50 C784.67 652.50 786.23 650.94 787.80 649.60 C789.73 647.94 791.67 643.93 793.60 641.10 L793.6 684 L22.9 684 Z" fill="url(#gp)"/>
<line x1="22" y1="451.3" x2="797" y2="451.3" stroke="#d8d8d8" stroke-opacity="0.7" stroke-dasharray="4 3" stroke-width="1"/>
<line x1="22" y1="640.5" x2="797" y2="640.5" stroke="#d8d8d8" stroke-opacity="0.7" stroke-dasharray="4 3" stroke-width="1"/>
<path d="M22.90 444.80 C27.97 448.93 33.03 457.20 38.10 457.20 C40.00 457.20 41.90 430.45 43.80 425.80 C45.40 421.89 47.00 420.01 48.60 418.10 C53.07 412.78 57.53 406.30 62.00 406.30 C62.63 406.30 63.27 406.48 63.90 406.70 C65.80 407.37 67.70 436.49 69.60 439.10 C72.13 442.58 74.67 443.41 77.20 444.80 C81.03 446.90 84.87 448.73 88.70 449.60 C96.33 451.33 103.97 452.90 111.60 452.90 C131.93 452.90 152.27 452.90 172.60 452.90 C175.77 452.90 178.93 424.70 182.10 420.00 C184.00 417.18 185.90 415.27 187.80 414.30 C192.90 411.69 198.00 409.60 203.10 409.60 C205.33 409.60 207.57 438.07 209.80 443.00 C212.03 447.93 214.27 450.81 216.50 452.50 C219.50 454.77 222.50 457.00 225.50 457.00 C230.03 457.00 234.57 450.04 239.10 449.00 C241.97 448.34 244.83 447.70 247.70 447.70 C250.53 447.70 253.37 449.72 256.20 450.20 C263.20 451.39 270.20 452.16 277.20 452.50 C287.37 452.99 297.53 453.40 307.70 453.40 C311.53 453.40 315.37 421.88 319.20 418.10 C321.73 415.60 324.27 414.54 326.80 413.40 C329.97 411.98 333.13 410.10 336.30 410.10 C338.53 410.10 340.77 441.05 343.00 443.00 C346.50 446.06 350.00 446.47 353.50 447.70 C357.33 449.05 361.17 450.34 365.00 451.00 C371.97 452.19 378.93 452.11 385.90 453.40 C390.03 454.17 394.17 458.20 398.30 458.20 C400.53 458.20 402.77 432.17 405.00 427.70 C407.53 422.63 410.07 421.18 412.60 418.10 C415.90 414.08 419.20 406.50 422.50 406.50 C424.53 406.50 426.57 434.34 428.60 437.20 C431.47 441.24 434.33 442.14 437.20 443.90 C441.00 446.24 444.80 448.67 448.60 449.60 C454.97 451.15 461.33 452.41 467.70 452.50 C489.30 452.81 510.90 452.90 532.50 452.90 C536.33 452.90 540.17 419.41 544.00 416.20 C547.17 413.55 550.33 412.46 553.50 411.50 C556.37 410.63 559.23 409.60 562.10 409.60 C564.00 409.60 565.90 437.38 567.80 441.00 C573.20 451.28 578.60 457.20 584.00 457.20 C586.23 457.20 588.47 428.15 590.70 422.90 C592.30 419.14 593.90 417.15 595.50 415.30 C599.63 410.53 603.77 404.80 607.90 404.80 C610.10 404.80 612.30 437.04 614.50 439.10 C616.33 440.81 618.17 441.06 620.00 442.00 C622.53 443.30 625.07 444.64 627.60 445.80 C631.43 447.55 635.27 449.85 639.10 450.60 C645.43 451.84 651.77 452.90 658.10 452.90 C678.13 452.90 698.17 452.90 718.20 452.90 C720.77 452.90 723.33 423.84 725.90 420.00 C728.73 415.76 731.57 413.52 734.40 412.40 C738.23 410.89 742.07 409.60 745.90 409.60 C748.43 409.60 750.97 448.23 753.50 450.60 C756.67 453.56 759.83 455.30 763.00 455.30 C766.20 455.30 769.40 453.68 772.60 452.50 C775.77 451.33 778.93 447.70 782.10 447.70 C785.30 447.70 788.50 447.99 791.70 448.70 C792.63 448.91 793.57 450.57 794.50 451.50" fill="none" stroke="#e23d50" stroke-width="1.9" stroke-linejoin="round" stroke-linecap="round"/>
<path d="M22.9 470.8 L23.0 472.2 L24.0 473.5 L25.0 475.0 L26.0 476.4 L27.0 478.0 L28.0 479.6 L29.0 481.1 L30.0 482.7 L31.0 484.2 L32.0 485.7 L33.0 487.1 L34.0 488.5 L35.0 489.7 L36.0 490.8 L37.0 491.7 L38.0 492.5 L39.0 493.2 L40.0 493.6 L41.0 493.9 L42.0 494.0 L43.0 493.9 L44.0 493.6 L45.0 493.2 L46.0 492.5 L47.0 491.7 L48.0 490.8 L49.0 489.7 L50.0 488.5 L51.0 487.1 L52.0 485.7 L53.0 484.2 L54.0 482.7 L55.0 481.1 L56.0 479.6 L57.0 478.0 L58.0 476.4 L59.0 475.0 L60.0 473.5 L61.0 472.2 L62.0 470.9 L63.0 469.8 L64.0 468.7 L201.2 468.7 L203.8 470.7 L205.7 473.1 L207.5 475.7 L209.3 478.5 L211.2 481.4 L213.0 484.2 L214.8 486.9 L216.7 489.3 L218.5 491.3 L220.3 492.8 L222.2 493.7 L224.0 494.0 L225.8 493.7 L227.7 492.8 L229.5 491.3 L231.3 489.3 L233.2 486.9 L235.0 484.2 L236.8 481.4 L238.7 478.5 L240.5 475.7 L242.3 473.1 L244.2 470.7 L246.0 468.7 L382.1 468.7 L385.8 470.7 L387.7 473.1 L389.5 475.7 L391.3 478.5 L393.2 481.4 L395.0 484.2 L396.8 486.9 L398.7 489.3 L400.5 491.3 L402.3 492.8 L404.2 493.7 L406.0 494.0 L407.8 493.7 L409.7 492.8 L411.5 491.3 L413.3 489.3 L415.2 486.9 L417.0 484.2 L418.8 481.4 L420.7 478.5 L422.5 475.7 L424.3 473.1 L426.2 470.7 L428.0 468.7 L564.0 468.7 L565.8 470.7 L567.6 473.1 L569.4 475.7 L571.2 478.5 L573.0 481.4 L574.8 484.2 L576.5 486.9 L578.3 489.3 L580.1 491.3 L581.9 492.8 L583.7 493.7 L585.5 494.0 L587.3 493.7 L589.1 492.8 L590.9 491.3 L592.7 489.3 L594.5 486.9 L596.2 484.2 L598.0 481.4 L599.8 478.5 L601.6 475.7 L603.4 473.1 L605.2 470.7 L607.0 468.7 L739.2 468.7 L741.8 470.7 L743.7 473.1 L745.5 475.7 L747.3 478.5 L749.2 481.4 L751.0 484.2 L752.8 486.9 L754.7 489.3 L756.5 491.3 L758.3 492.8 L760.2 493.7 L762.0 494.0 L763.8 493.7 L765.7 492.8 L767.5 491.3 L769.3 489.3 L771.2 486.9 L773.0 484.2 L774.8 481.4 L776.7 478.5 L778.5 475.7 L780.3 473.1 L782.2 470.7 L784.0 468.7 L795.5 468.7" fill="none" stroke="#33b24e" stroke-width="2" stroke-linejoin="round" stroke-linecap="round"/>
<path d="M22.90 663.00 C25.10 655.37 27.30 646.79 29.50 640.10 C31.73 633.31 33.97 625.13 36.20 622.00 C37.47 620.23 38.73 619.04 40.00 618.20 C40.63 617.78 41.27 617.74 41.90 617.20 C43.50 615.83 45.10 592.40 46.70 592.40 C49.87 592.40 53.03 619.19 56.20 626.80 C58.43 632.17 60.67 638.47 62.90 639.20 C64.50 639.72 66.10 639.52 67.70 640.10 C69.30 640.68 70.90 667.80 72.50 667.80 C74.70 667.80 76.90 656.96 79.10 653.50 C82.30 648.47 85.50 643.90 88.70 642.00 C93.77 638.99 98.83 637.41 103.90 636.30 C110.27 634.90 116.63 633.67 123.00 633.40 C130.00 633.11 137.00 633.01 144.00 632.90 C155.13 632.72 166.27 632.83 177.40 632.50 C180.23 632.42 183.07 603.50 185.90 603.50 C187.83 603.50 189.77 612.67 191.70 615.30 C194.23 618.75 196.77 621.61 199.30 622.90 C202.17 624.36 205.03 623.72 207.90 625.80 C209.17 626.72 210.43 651.50 211.70 651.50 C213.93 651.50 216.17 635.11 218.40 630.60 C220.53 626.29 222.67 621.00 224.80 621.00 C226.37 621.00 227.93 623.87 229.50 625.80 C234.60 632.08 239.70 652.50 244.80 652.50 C248.60 652.50 252.40 643.61 256.20 641.10 C259.40 638.99 262.60 637.23 265.80 636.30 C271.50 634.64 277.20 633.32 282.90 633.00 C292.77 632.45 302.63 632.83 312.50 632.10 C315.37 631.89 318.23 603.50 321.10 603.50 C323.63 603.50 326.17 614.57 328.70 617.20 C332.83 621.49 336.97 620.04 341.10 625.80 C343.00 628.45 344.90 663.00 346.80 663.00 C349.67 663.00 352.53 646.14 355.40 643.90 C360.50 639.92 365.60 638.82 370.70 637.20 C375.77 635.59 380.83 635.21 385.90 633.40 C387.17 632.95 388.43 632.44 389.70 631.50 C392.27 629.60 394.83 620.51 397.40 617.20 C399.63 614.32 401.87 614.65 404.10 610.50 C405.37 608.14 406.63 585.70 407.90 585.70 C408.83 585.70 409.77 587.06 410.70 588.60 C412.30 591.24 413.90 608.37 415.50 615.30 C417.40 623.53 419.30 632.65 421.20 635.30 C423.03 637.85 424.87 637.32 426.70 640.10 C428.60 642.98 430.50 674.40 432.40 674.40 C435.27 674.40 438.13 650.94 441.00 647.70 C444.80 643.40 448.60 641.70 452.40 640.10 C458.13 637.68 463.87 635.78 469.60 635.00 C479.77 633.62 489.93 632.50 500.10 632.50 C512.17 632.50 524.23 632.50 536.30 632.50 C538.23 632.50 540.17 610.09 542.10 607.70 C543.37 606.14 544.63 604.80 545.90 604.80 C547.80 604.80 549.70 614.77 551.60 617.20 C554.13 620.44 556.67 622.82 559.20 623.90 C561.43 624.85 563.67 624.51 565.90 625.80 C567.50 626.72 569.10 661.10 570.70 661.10 C574.50 661.10 578.30 621.00 582.10 621.00 C584.00 621.00 585.90 622.00 587.80 622.00 C589.40 622.00 591.00 600.10 592.60 600.10 C596.10 600.10 599.60 630.76 603.10 634.40 C605.00 636.38 606.90 638.20 608.80 638.20 C610.40 638.20 612.00 634.40 613.60 634.40 C615.50 634.40 617.40 664.90 619.30 664.90 C622.07 664.90 624.83 650.70 627.60 647.70 C632.70 642.17 637.80 638.62 642.90 637.20 C650.53 635.07 658.17 633.92 665.80 633.40 C672.80 632.93 679.80 632.50 686.80 632.50 C698.87 632.50 710.93 632.50 723.00 632.50 C725.23 632.50 727.47 605.80 729.70 605.80 C732.57 605.80 735.43 617.54 738.30 620.10 C740.83 622.36 743.37 624.80 745.90 624.80 C746.83 624.80 747.77 624.80 748.70 624.80 C750.00 624.80 751.30 642.00 752.60 642.00 C756.07 642.00 759.53 624.80 763.00 624.80 C766.20 624.80 769.40 635.75 772.60 640.10 C776.10 644.86 779.60 652.50 783.10 652.50 C784.67 652.50 786.23 650.94 787.80 649.60 C789.73 647.94 791.67 643.93 793.60 641.10" fill="none" stroke="#b87ad8" stroke-width="2" stroke-linejoin="round" stroke-linecap="round"/>
<line x1="797.5" y1="388.5" x2="797.5" y2="502.5" stroke="#c3c7cd" stroke-width="1.5"/>
<line x1="22" y1="502.5" x2="797.5" y2="502.5" stroke="#c3c7cd" stroke-width="1.5"/>
<line x1="75.3" y1="502.5" x2="75.3" y2="507.0" stroke="#c3c7cd" stroke-width="1.5"/>
<line x1="165.5" y1="502.5" x2="165.5" y2="507.0" stroke="#c3c7cd" stroke-width="1.5"/>
<line x1="255.5" y1="502.5" x2="255.5" y2="507.0" stroke="#c3c7cd" stroke-width="1.5"/>
<line x1="345.9" y1="502.5" x2="345.9" y2="507.0" stroke="#c3c7cd" stroke-width="1.5"/>
<line x1="436.2" y1="502.5" x2="436.2" y2="507.0" stroke="#c3c7cd" stroke-width="1.5"/>
<line x1="526.2" y1="502.5" x2="526.2" y2="507.0" stroke="#c3c7cd" stroke-width="1.5"/>
<line x1="616.5" y1="502.5" x2="616.5" y2="507.0" stroke="#c3c7cd" stroke-width="1.5"/>
<line x1="706.8" y1="502.5" x2="706.8" y2="507.0" stroke="#c3c7cd" stroke-width="1.5"/>
<line x1="797.5" y1="569.5" x2="797.5" y2="684" stroke="#c3c7cd" stroke-width="1.5"/>
<line x1="22" y1="684" x2="797.5" y2="684" stroke="#c3c7cd" stroke-width="1.5"/>
<line x1="75.3" y1="684" x2="75.3" y2="688.5" stroke="#c3c7cd" stroke-width="1.5"/>
<line x1="165.5" y1="684" x2="165.5" y2="688.5" stroke="#c3c7cd" stroke-width="1.5"/>
<line x1="255.5" y1="684" x2="255.5" y2="688.5" stroke="#c3c7cd" stroke-width="1.5"/>
<line x1="345.9" y1="684" x2="345.9" y2="688.5" stroke="#c3c7cd" stroke-width="1.5"/>
<line x1="436.2" y1="684" x2="436.2" y2="688.5" stroke="#c3c7cd" stroke-width="1.5"/>
<line x1="526.2" y1="684" x2="526.2" y2="688.5" stroke="#c3c7cd" stroke-width="1.5"/>
<line x1="616.5" y1="684" x2="616.5" y2="688.5" stroke="#c3c7cd" stroke-width="1.5"/>
<line x1="706.8" y1="684" x2="706.8" y2="688.5" stroke="#c3c7cd" stroke-width="1.5"/>
<line x1="797.5" y1="423.9" x2="802" y2="423.9" stroke="#c3c7cd" stroke-width="1.5"/>
<line x1="797.5" y1="484.9" x2="802" y2="484.9" stroke="#c3c7cd" stroke-width="1.5"/>
<line x1="797.5" y1="603.5" x2="802" y2="603.5" stroke="#c3c7cd" stroke-width="1.5"/>
<line x1="797.5" y1="664" x2="802" y2="664" stroke="#c3c7cd" stroke-width="1.5"/>
<line x1="914.5" y1="395.3" x2="914.5" y2="586.5" stroke="#2f3746" stroke-width="1.2"/>
<line x1="941.8" y1="395.3" x2="941.8" y2="586.5" stroke="#2f3746" stroke-width="1.2"/>
<line x1="975.1" y1="395.3" x2="975.1" y2="586.5" stroke="#2f3746" stroke-width="1.2"/>
<line x1="1008.4" y1="395.3" x2="1008.4" y2="586.5" stroke="#2f3746" stroke-width="1.2"/>
<line x1="1041.8" y1="395.3" x2="1041.8" y2="586.5" stroke="#2f3746" stroke-width="1.2"/>
<line x1="1074.8" y1="395.3" x2="1074.8" y2="586.5" stroke="#2f3746" stroke-width="1.2"/>
<line x1="1107" y1="395.3" x2="1107" y2="586.5" stroke="#2f3746" stroke-width="1.2"/>
<line x1="914.5" y1="401.1" x2="1107" y2="401.1" stroke="#303847" stroke-width="1.2" stroke-dasharray="5 3"/>
<line x1="914.5" y1="436.2" x2="1107" y2="436.2" stroke="#303847" stroke-width="1.2" stroke-dasharray="5 3"/>
<line x1="914.5" y1="471.5" x2="1107" y2="471.5" stroke="#303847" stroke-width="1.2" stroke-dasharray="5 3"/>
<line x1="914.5" y1="506.8" x2="1107" y2="506.8" stroke="#303847" stroke-width="1.2" stroke-dasharray="5 3"/>
<line x1="914.5" y1="541.9" x2="1107" y2="541.9" stroke="#303847" stroke-width="1.2" stroke-dasharray="5 3"/>
<line x1="914.5" y1="577.2" x2="1107" y2="577.2" stroke="#303847" stroke-width="1.2" stroke-dasharray="5 3"/>
<line x1="914.5" y1="586.5" x2="1107" y2="586.5" stroke="#303847" stroke-width="1.2" stroke-dasharray="5 3"/>
<path d="M930.6 585.7 C930.6 585.7 998.0 586.6 1018.4 585.8 C1021.4 585.7 1027.9 582.9 1030.7 581.7 C1033.6 580.5 1040.1 577.1 1042.9 575.6 C1045.2 574.4 1050.9 571.8 1052.7 570.1 C1054.0 568.8 1055.4 564.3 1056.4 562.7 C1057.4 561.2 1059.9 557.8 1061.3 556.6 C1063.3 554.9 1069.1 552.2 1071.1 550.5 C1073.1 548.8 1076.8 543.9 1078.5 541.9 C1080.5 539.5 1086.9 533.4 1087.1 531.5 C1087.2 530.4 1081.5 529.3 1079.7 529.0 C1076.9 528.5 1070.3 528.0 1067.4 527.8 C1060.3 527.4 1043.9 526.8 1036.8 526.6 C1028.2 526.4 1008.6 526.0 1000.0 525.9 C991.8 525.8 973.1 525.4 965.0 525.7 C964.4 525.7 963.2 526.7 963.1 527.2 C962.6 529.2 963.0 534.4 962.5 536.3 C962.3 537.0 960.7 538.2 960.0 538.2 C955.6 538.5 944.9 538.0 940.4 537.6 C938.4 537.4 933.8 536.3 931.9 535.7 C930.4 535.2 927.0 533.6 925.7 532.7 C925.0 532.2 923.3 530.2 923.3 529.6 C923.3 529.1 925.1 527.8 925.7 527.8 C927.1 527.9 930.5 529.5 931.9 530.2 C933.9 531.2 938.5 533.8 940.4 535.1 C941.6 536.0 944.3 538.2 945.3 539.4 C946.6 541.0 949.3 544.9 950.2 546.8 C951.1 548.7 952.4 553.3 952.7 555.3 C952.9 556.7 952.7 560.2 952.1 561.5 C951.3 563.4 948.0 567.2 946.6 568.8 C944.7 570.8 939.9 574.8 938.0 576.8 C936.1 578.8 930.6 585.7 930.6 585.7" fill="none" stroke="#3a97e6" stroke-width="2" stroke-linejoin="round"/>
<circle cx="794.3" cy="451.5" r="3.4" fill="#2f7df0"/>
<circle cx="794.3" cy="640.8" r="3.4" fill="#2f7df0"/>
<line x1="1190" y1="340.5" x2="1255.5" y2="340.5" stroke="#3c4452" stroke-width="1"/>
<line x1="1190" y1="373.4" x2="1255.5" y2="373.4" stroke="#3c4452" stroke-width="1"/>
<line x1="1190" y1="406.6" x2="1255.5" y2="406.6" stroke="#3c4452" stroke-width="1"/>
<line x1="1190" y1="439.0" x2="1255.5" y2="439.0" stroke="#3c4452" stroke-width="1"/>
<line x1="1190" y1="472.0" x2="1255.5" y2="472.0" stroke="#3c4452" stroke-width="1"/>
<line x1="1190" y1="505.0" x2="1255.5" y2="505.0" stroke="#3c4452" stroke-width="1"/>
<line x1="1195.5" y1="340.5" x2="1195.5" y2="505" stroke="#8b929c" stroke-width="1"/>
<rect x="1204.2" y="385.3" width="43.3" height="43.3" fill="#fb8a5d"/>
<rect x="1204.2" y="428.6" width="43.3" height="8.3" fill="#fad55a"/>
<rect x="1204.2" y="436.9" width="43.3" height="15" fill="#6dcd7d"/>
<rect x="1204.2" y="451.9" width="43.3" height="53.1" fill="#9b7bd4"/>
<line x1="1152" y1="513.3" x2="1256" y2="513.3" stroke="#3a4250" stroke-width="1"/>
<line x1="1152" y1="543.2" x2="1256" y2="543.2" stroke="#3a4250" stroke-width="1"/>
<line x1="1152" y1="573" x2="1256" y2="573" stroke="#3a4250" stroke-width="1"/>
<line x1="1152" y1="602.1" x2="1256" y2="602.1" stroke="#3a4250" stroke-width="1"/>
</svg>
<div class="t" style="left:54.8px;top:511px;font-size:10.5px;font-weight:400;color:#939aa3;;-webkit-text-stroke:0.25px currentColor;">17:00:22</div>
<div class="t" style="left:54.8px;top:693px;font-size:10.5px;font-weight:400;color:#939aa3;;-webkit-text-stroke:0.25px currentColor;">17:00:22</div>
<div class="t" style="left:145.0px;top:511px;font-size:10.5px;font-weight:400;color:#939aa3;;-webkit-text-stroke:0.25px currentColor;">17:00:24</div>
<div class="t" style="left:145.0px;top:693px;font-size:10.5px;font-weight:400;color:#939aa3;;-webkit-text-stroke:0.25px currentColor;">17:00:24</div>
<div class="t" style="left:235.0px;top:511px;font-size:10.5px;font-weight:400;color:#939aa3;;-webkit-text-stroke:0.25px currentColor;">17:00:26</div>
<div class="t" style="left:235.0px;top:693px;font-size:10.5px;font-weight:400;color:#939aa3;;-webkit-text-stroke:0.25px currentColor;">17:00:26</div>
<div class="t" style="left:325.4px;top:511px;font-size:10.5px;font-weight:400;color:#939aa3;;-webkit-text-stroke:0.25px currentColor;">17:00:28</div>
<div class="t" style="left:325.4px;top:693px;font-size:10.5px;font-weight:400;color:#939aa3;;-webkit-text-stroke:0.25px currentColor;">17:00:28</div>
<div class="t" style="left:415.7px;top:511px;font-size:10.5px;font-weight:400;color:#939aa3;;-webkit-text-stroke:0.25px currentColor;">17:00:30</div>
<div class="t" style="left:415.7px;top:693px;font-size:10.5px;font-weight:400;color:#939aa3;;-webkit-text-stroke:0.25px currentColor;">17:00:30</div>
<div class="t" style="left:505.7px;top:511px;font-size:10.5px;font-weight:400;color:#939aa3;;-webkit-text-stroke:0.25px currentColor;">17:00:32</div>
<div class="t" style="left:505.7px;top:693px;font-size:10.5px;font-weight:400;color:#939aa3;;-webkit-text-stroke:0.25px currentColor;">17:00:32</div>
<div class="t" style="left:596.0px;top:511px;font-size:10.5px;font-weight:400;color:#939aa3;;-webkit-text-stroke:0.25px currentColor;">17:00:34</div>
<div class="t" style="left:596.0px;top:693px;font-size:10.5px;font-weight:400;color:#939aa3;;-webkit-text-stroke:0.25px currentColor;">17:00:34</div>
<div class="t" style="left:686.3px;top:511px;font-size:10.5px;font-weight:400;color:#939aa3;;-webkit-text-stroke:0.25px currentColor;">17:00:36</div>
<div class="t" style="left:686.3px;top:693px;font-size:10.5px;font-weight:400;color:#939aa3;;-webkit-text-stroke:0.25px currentColor;">17:00:36</div>
<div class="t" style="left:805.3px;top:420px;font-size:10.4px;font-weight:400;color:#939aa3;;-webkit-text-stroke:0.25px currentColor;">15.00</div>
<div class="t" style="left:803.5px;top:481px;font-size:10.4px;font-weight:400;color:#939aa3;;-webkit-text-stroke:0.25px currentColor;">-5.00</div>
<div class="t" style="left:805.3px;top:599px;font-size:10.4px;font-weight:400;color:#939aa3;;-webkit-text-stroke:0.25px currentColor;">1.60</div>
<div class="t" style="left:803.5px;top:660px;font-size:10.4px;font-weight:400;color:#939aa3;;-webkit-text-stroke:0.25px currentColor;">-1.60</div>
<div class="r" style="left:797.5px;top:442px;width:27.5px;height:17.7px;background:#8b8f95;border-radius:2px"></div>
<div class="t" style="left:800.5px;top:446px;font-size:11px;font-weight:400;color:#fff;;-webkit-text-stroke:0.35px currentColor;">5.88</div>
<div class="r" style="left:797.5px;top:631px;width:32.3px;height:17.7px;background:#8b8f95;border-radius:2px"></div>
<div class="t" style="left:800.0px;top:635px;font-size:11px;font-weight:700;color:#fff;">-0.37</div>
<div class="t" style="left:881.0px;top:397px;font-size:10px;font-weight:400;color:#858b93;width:25px;text-align:right;-webkit-text-stroke:0.25px currentColor;">4,800</div>
<div class="t" style="left:881.0px;top:432px;font-size:10px;font-weight:400;color:#858b93;width:25px;text-align:right;-webkit-text-stroke:0.25px currentColor;">4,500</div>
<div class="t" style="left:881.0px;top:467px;font-size:10px;font-weight:400;color:#858b93;width:25px;text-align:right;-webkit-text-stroke:0.25px currentColor;">4,200</div>
<div class="t" style="left:881.0px;top:502px;font-size:10px;font-weight:400;color:#858b93;width:25px;text-align:right;-webkit-text-stroke:0.25px currentColor;">3,900</div>
<div class="t" style="left:881.0px;top:538px;font-size:10px;font-weight:400;color:#858b93;width:25px;text-align:right;-webkit-text-stroke:0.25px currentColor;">3,600</div>
<div class="t" style="left:881.0px;top:573px;font-size:10px;font-weight:400;color:#858b93;width:25px;text-align:right;-webkit-text-stroke:0.25px currentColor;">3,300</div>
<div class="t" style="left:884.5px;top:594px;font-size:10.2px;font-weight:400;color:#858b93;width:60px;text-align:center;-webkit-text-stroke:0.25px currentColor;">3.42</div>
<div class="t" style="left:911.8px;top:594px;font-size:10.2px;font-weight:400;color:#858b93;width:60px;text-align:center;-webkit-text-stroke:0.25px currentColor;">6</div>
<div class="t" style="left:945.1px;top:594px;font-size:10.2px;font-weight:400;color:#858b93;width:60px;text-align:center;-webkit-text-stroke:0.25px currentColor;">9</div>
<div class="t" style="left:978.4px;top:594px;font-size:10.2px;font-weight:400;color:#858b93;width:60px;text-align:center;-webkit-text-stroke:0.25px currentColor;">12</div>
<div class="t" style="left:1011.8px;top:594px;font-size:10.2px;font-weight:400;color:#858b93;width:60px;text-align:center;-webkit-text-stroke:0.25px currentColor;">15</div>
<div class="t" style="left:1044.8px;top:594px;font-size:10.2px;font-weight:400;color:#858b93;width:60px;text-align:center;-webkit-text-stroke:0.25px currentColor;">18</div>
<div class="t" style="left:1077.0px;top:594px;font-size:10.2px;font-weight:400;color:#858b93;width:60px;text-align:center;-webkit-text-stroke:0.25px currentColor;">20.91</div>
<div class="t" style="left:966.6px;top:613px;font-size:10.8px;font-weight:400;color:#7f858d;;-webkit-text-stroke:0.25px currentColor;">P-Patient /cmH2O</div>
<div class="t" style="left:832px;top:481px;width:80px;height:12px;font-size:11.8px;line-height:12px;text-align:center;color:#7a8089;transform:rotate(-90deg);-webkit-text-stroke:0.2px currentColor">Volume /ml</div>
<div class="t" style="left:1156.0px;top:336px;font-size:9.4px;font-weight:400;color:#eceef0;width:30px;text-align:right;-webkit-text-stroke:0.25px currentColor;">7</div>
<div class="t" style="left:1156.0px;top:369px;font-size:9.4px;font-weight:400;color:#eceef0;width:30px;text-align:right;-webkit-text-stroke:0.25px currentColor;">5.6</div>
<div class="t" style="left:1156.0px;top:402px;font-size:9.4px;font-weight:400;color:#eceef0;width:30px;text-align:right;-webkit-text-stroke:0.25px currentColor;">4.2</div>
<div class="t" style="left:1156.0px;top:434px;font-size:9.4px;font-weight:400;color:#eceef0;width:30px;text-align:right;-webkit-text-stroke:0.25px currentColor;">2.8</div>
<div class="t" style="left:1156.0px;top:467px;font-size:9.4px;font-weight:400;color:#eceef0;width:30px;text-align:right;-webkit-text-stroke:0.25px currentColor;">1.4</div>
<div class="t" style="left:1156.0px;top:500px;font-size:9.4px;font-weight:400;color:#eceef0;width:30px;text-align:right;-webkit-text-stroke:0.25px currentColor;">0</div>
<div class="t" style="left:1132.8px;top:418.4px;width:60px;height:10px;font-size:8.5px;line-height:10px;text-align:center;color:#6f7680;transform:rotate(-90deg)">Volume (L)</div>
<div class="r" style="left:1166.7px;top:522px;width:12.5px;height:12.8px;background:#6ccf7c;border-radius:2.5px"></div>
<div class="t" style="left:1181.4px;top:525px;font-size:10.3px;font-weight:700;color:#e9ebee;">ERV:</div>
<div class="t" style="left:1207.7px;top:524px;font-size:11.9px;font-weight:700;color:#ffffff;">0.64 L</div>
<div class="r" style="left:1166.7px;top:552px;width:12.5px;height:12.8px;background:#fb8a5d;border-radius:2.5px"></div>
<div class="t" style="left:1184.0px;top:555px;font-size:10.3px;font-weight:700;color:#e9ebee;">IRV:</div>
<div class="t" style="left:1209.0px;top:554px;font-size:11.9px;font-weight:700;color:#ffffff;">1.84 L</div>
<div class="r" style="left:1166.7px;top:582px;width:12.5px;height:12.8px;background:#9b7bd4;border-radius:2.5px"></div>
<div class="t" style="left:1185.0px;top:585px;font-size:10.3px;font-weight:700;color:#e9ebee;">RV:</div>
<div class="t" style="left:1209.0px;top:584px;font-size:11.9px;font-weight:700;color:#ffffff;">2.27 L</div>
<div class="r" style="left:1166.7px;top:611.5px;width:12.5px;height:12.8px;background:#fad55a;border-radius:2.5px"></div>
<div class="t" style="left:1185.0px;top:614px;font-size:10.3px;font-weight:700;color:#e9ebee;">VT:</div>
<div class="t" style="left:1208.0px;top:613px;font-size:11.9px;font-weight:700;color:#ffffff;">0.35 L</div>
<div class="t" style="left:851.3px;top:336px;font-size:12.9px;font-weight:700;color:#f3f4f6;">Pressure-Volume Loop</div>
<div class="t" style="left:865.0px;top:668px;font-size:13.2px;font-weight:700;color:#f3f4f6;">Calculated Parameters</div>
<div class="r" style="left:865px;top:700px;width:119px;height:60px;border:1px solid #3e4655;border-radius:8px;box-sizing:border-box"></div>
<div class="t" style="left:878.0px;top:711px;font-size:10.3px;font-weight:400;color:#d0d3d8;;-webkit-text-stroke:0.35px currentColor;">Minute volume</div>
<div class="t" style="left:878.0px;top:726px;font-size:13px;font-weight:700;color:#f3f4f6;">14.08 <span style="font-size:8.5px;font-weight:400;color:#c8ccd2">L/min</span></div>
<div class="r" style="left:994px;top:700px;width:118px;height:60px;border:1px solid #3e4655;border-radius:8px;box-sizing:border-box"></div>
<div class="t" style="left:1007.0px;top:711px;font-size:10.3px;font-weight:400;color:#d0d3d8;;-webkit-text-stroke:0.35px currentColor;">Tidal volume</div>
<div class="t" style="left:1007.0px;top:726px;font-size:13px;font-weight:700;color:#f3f4f6;">704 <span style="font-size:8.5px;font-weight:400;color:#c8ccd2">ml</span></div>
<div class="r" style="left:1124px;top:700px;width:117px;height:60px;border:1px solid #3e4655;border-radius:8px;box-sizing:border-box"></div>
<div class="t" style="left:1137.0px;top:711px;font-size:10.3px;font-weight:400;color:#d0d3d8;;-webkit-text-stroke:0.35px currentColor;">Mean airway</div>
<div class="t" style="left:1137.0px;top:724px;font-size:10.3px;font-weight:400;color:#d0d3d8;;-webkit-text-stroke:0.35px currentColor;">pressure</div>
</body></html>
